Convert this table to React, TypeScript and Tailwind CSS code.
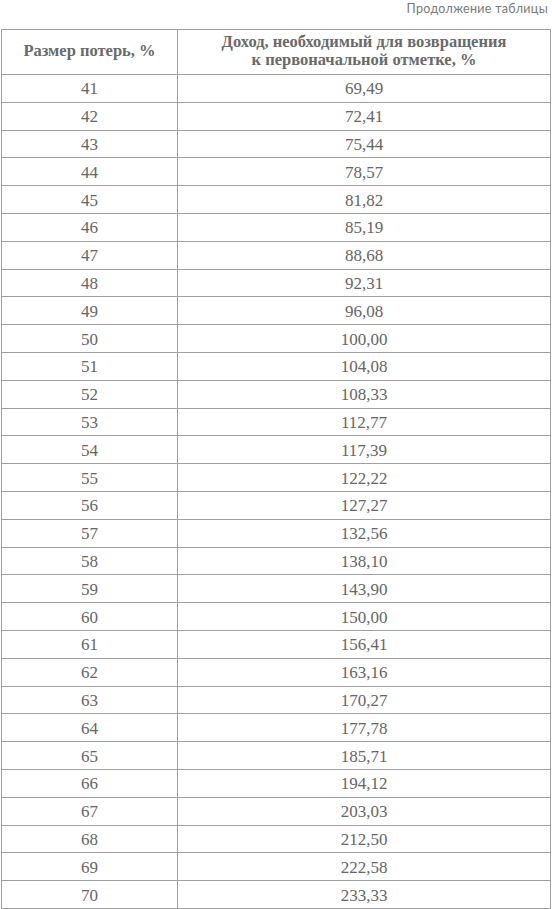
import React from 'react';

const rows: [number, string][] = [
  [41, '69,49'], [42, '72,41'], [43, '75,44'], [44, '78,57'], [45, '81,82'],
  [46, '85,19'], [47, '88,68'], [48, '92,31'], [49, '96,08'], [50, '100,00'],
  [51, '104,08'], [52, '108,33'], [53, '112,77'], [54, '117,39'], [55, '122,22'],
  [56, '127,27'], [57, '132,56'], [58, '138,10'], [59, '143,90'], [60, '150,00'],
  [61, '156,41'], [62, '163,16'], [63, '170,27'], [64, '177,78'], [65, '185,71'],
  [66, '194,12'], [67, '203,03'], [68, '212,50'], [69, '222,58'], [70, '233,33'],
];

const cell =
  "border border-[#a0a0a0] text-center font-['Liberation_Serif','DejaVu_Serif',serif] text-[17px] leading-[20px] pt-[2px] text-[#666666]";
const head =
  "border border-[#a0a0a0] text-center font-['Liberation_Serif','DejaVu_Serif',serif] text-[16.5px] leading-[18px] pb-[2px] font-bold text-[#6a6a6a]";

export default function App() {
  return (
    <div className="w-[552px] h-[909px] bg-white overflow-hidden">
      <div className="h-[29px] pr-[4px] pt-[1px] text-right text-[12.5px] leading-[16px] tracking-[0.3px] text-[#7a7a7a] font-['Lato','Liberation_Sans',sans-serif]">
        Продолжение таблицы
      </div>
      <table className="ml-[1px] w-[550px] table-fixed border-collapse">
        <colgroup>
          <col className="w-[176px]" />
          <col />
        </colgroup>
        <thead>
          <tr className="h-[45px]">
            <th className={head}>Размер потерь, %</th>
            <th className={head}>
              Доход, необходимый для возвращения
              <br />к первоначальной отметке, %
            </th>
          </tr>
        </thead>
        <tbody>
          {rows.map(([loss, gain]) => (
            <tr key={loss} className="h-[27.8px]">
              <td className={cell}>{loss}</td>
              <td className={cell}>{gain}</td>
            </tr>
          ))}
        </tbody>
      </table>
    </div>
  );
}
